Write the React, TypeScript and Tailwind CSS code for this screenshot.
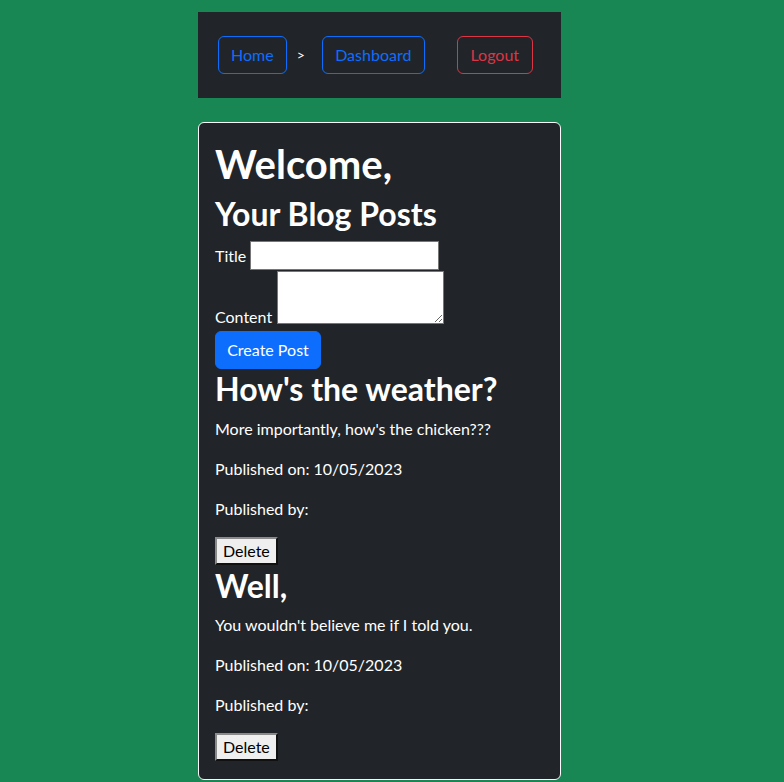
import React from 'react'

type Post = { id: number; title: string; body: string; date: string }

const posts: Post[] = [
  { id: 1, title: "How's the weather?", body: "More importantly, how's the chicken???", date: '10/05/2023' },
  { id: 2, title: 'Well,', body: "You wouldn't believe me if I told you.", date: '10/05/2023' },
]

function DeleteButton() {
  return (
    <div className="h-[30px]">
      <button className="h-[28px] px-[6px] bg-[#efefef] text-black text-base leading-6 border-2 border-solid border-t-[#8a8a8a] border-l-[#8a8a8a] border-r-[#111] border-b-[#111]">
        Delete
      </button>
    </div>
  )
}

export default function App() {
  return (
    <div className="min-h-[782px] bg-[#198754] font-['Segoe_UI','Lato',sans-serif] text-base leading-6 text-white pt-3 pb-[3px]">
      {/* top nav */}
      <nav className="ml-[198px] w-[363px] h-[86px] bg-[#212529] flex items-center pl-5">
        <a className="h-[38px] px-3 flex items-center border border-[#0d6efd] text-[#0d6efd] rounded-md">Home</a>
        <span className="ml-[10px] mr-[17px] text-white text-sm">&gt;</span>
        <a className="h-[38px] w-[103px] justify-center flex items-center border border-[#0d6efd] text-[#0d6efd] rounded-md">Dashboard</a>
        <a className="ml-8 h-[38px] w-[76px] justify-center flex items-center border border-[#dc3545] text-[#dc3545] rounded-md">Logout</a>
      </nav>

      <div className="ml-[198px] mt-6 w-[363px] bg-[#212529] border border-[#f8f9fa] rounded-md p-4">
        <h1 className="text-[40px] leading-[48px] font-bold mb-2 pt-px">Welcome,</h1>
        <h2 className="text-[32px] leading-[38.4px] font-bold mb-2 -mt-px">Your Blog Posts</h2>

        <form>
          <div className="flex items-center gap-1">
            <label>Title</label>
            <input className="w-[189px] h-[29px] bg-white border border-[#767676] text-black" />
          </div>
          <div className="flex items-end gap-[5px] mt-px">
            <label className="leading-4 -mb-px">Content</label>
            <textarea className="w-[167px] h-[53px] bg-white border border-[#767676] text-black resize-y" />
          </div>
          <button
            type="button"
            className="block mt-[7px] mb-px h-[38px] w-[106px] bg-[#0d6efd] text-white rounded-md border border-[#0d6efd]"
          >
            Create Post
          </button>
        </form>

        {posts.map((p) => (
          <div key={p.id}>
            <h2 className="text-[32px] leading-[38.4px] font-bold mb-2">{p.title}</h2>
            <p className="mb-4">{p.body}</p>
            <p className="mb-4">Published on: {p.date}</p>
            <p className="mb-4">Published by:</p>
            <DeleteButton />
          </div>
        ))}
      </div>
    </div>
  )
}
